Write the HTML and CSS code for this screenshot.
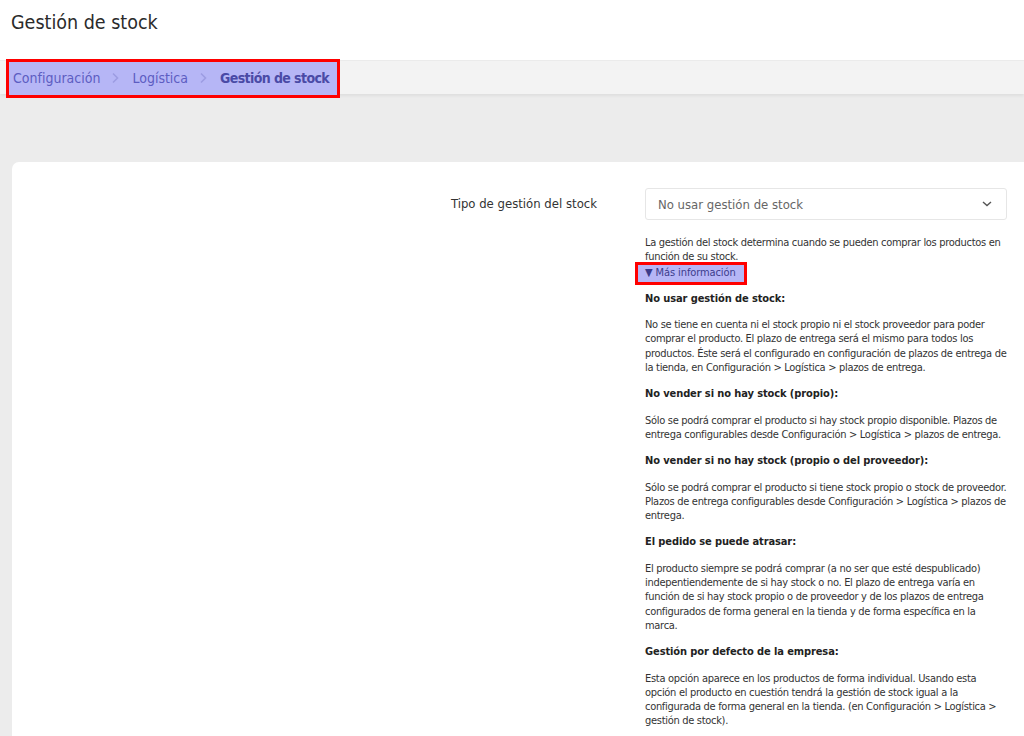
FILE: index.html
```html
<!DOCTYPE html>
<html lang="es">
<head>
    <meta charset="UTF-8">
    <meta name="viewport" content="width=device-width, initial-scale=1.0">
    <title>Gestión de stock</title>
    <link rel="stylesheet" href="styles.css">
</head>
<body>
    <header class="page-header">
        <h1>Gestión de stock</h1>
    </header>

    <div class="breadcrumb-bar">
        <nav class="breadcrumb marked">
            <a href="#">Configuración</a>
            <span class="sep">
                <svg width="8" height="12" viewBox="0 0 8 12"><path d="M2 1.5 L6.5 6 L2 10.5" fill="none" stroke="currentColor" stroke-width="1.6"/></svg>
            </span>
            <a href="#">Logística</a>
            <span class="sep">
                <svg width="8" height="12" viewBox="0 0 8 12"><path d="M2 1.5 L6.5 6 L2 10.5" fill="none" stroke="currentColor" stroke-width="1.6"/></svg>
            </span>
            <span class="current">Gestión de stock</span>
        </nav>
    </div>

    <main class="content">
        <section class="card">
            <div class="form-row">
                <label class="form-label" for="stock-type">Tipo de gestión del stock</label>
                <div class="form-control">
                    <div class="select" id="stock-type">
                        <span>No usar gestión de stock</span>
                        <svg width="10" height="6" viewBox="0 0 10 6"><path d="M1 1 L5 4.5 L9 1" fill="none" stroke="#555" stroke-width="1.4"/></svg>
                    </div>

                    <div class="help">
                        <p class="help-intro">La gestión del stock determina cuando se pueden comprar los productos en función de su stock.</p>
                        <details open>
                            <summary class="marked">&#9660; Más información</summary>

                            <h4>No usar gestión de stock:</h4>
                            <p>No se tiene en cuenta ni el stock propio ni el stock proveedor para poder comprar el producto. El plazo de entrega será el mismo para todos los productos. Éste será el configurado en configuración de plazos de entrega de la tienda, en Configuración &gt; Logística &gt; plazos de entrega.</p>

                            <h4>No vender si no hay stock (propio):</h4>
                            <p>Sólo se podrá comprar el producto si hay stock propio disponible. Plazos de entrega configurables desde Configuración &gt; Logística &gt; plazos de entrega.</p>

                            <h4>No vender si no hay stock (propio o del proveedor):</h4>
                            <p>Sólo se podrá comprar el producto si tiene stock propio o stock de proveedor. Plazos de entrega configurables desde Configuración &gt; Logística &gt; plazos de entrega.</p>

                            <h4>El pedido se puede atrasar:</h4>
                            <p>El producto siempre se podrá comprar (a no ser que esté despublicado) indepentiendemente de si hay stock o no. El plazo de entrega varía en función de si hay stock propio o de proveedor y de los plazos de entrega configurados de forma general en la tienda y de forma específica en la marca.</p>

                            <h4>Gestión por defecto de la empresa:</h4>
                            <p>Esta opción aparece en los productos de forma individual. Usando esta opción el producto en cuestión tendrá la gestión de stock igual a la configurada de forma general en la tienda. (en Configuración &gt; Logística &gt; gestión de stock).</p>
                        </details>
                    </div>
                </div>
            </div>
        </section>
    </main>
</body>
</html>
```

FILE: styles.css
```css
* {
    margin: 0;
    padding: 0;
    box-sizing: border-box;
}

body {
    font-family: 'DejaVu Sans Condensed', 'DejaVu Sans', Verdana, sans-serif;
    background: #ececec;
    color: #333;
    height: 736px;
    overflow: hidden;
}

a {
    text-decoration: none;
}

.page-header {
    background: #fff;
    height: 60px;
    padding: 11px 11px 0;
}

.page-header h1 {
    font-size: 19.5px;
    font-weight: normal;
    color: #2b2b2b;
}

.breadcrumb-bar {
    background: #f3f3f3;
    border-top: 1px solid #ebebeb;
    height: 34px;
    padding-left: 6px;
    box-shadow: 0 2px 3px rgba(0, 0, 0, 0.06);
}

/* highlighted elements */
.marked {
    background: #b6b6f6;
    border: 3px solid #ff0000;
}

.breadcrumb {
    display: inline-flex;
    align-items: center;
    height: 39px;
    margin-top: -2px;
    padding: 0 8px 2px 4px;
    font-size: 14px;
}

.breadcrumb a {
    color: #5d5dc2;
}

.breadcrumb .sep {
    display: flex;
    color: #9d9de2;
    margin: 0 13px 0 11px;
}

.breadcrumb .current {
    color: #4a4aa6;
    font-weight: bold;
    letter-spacing: -0.6px;
}

.content {
    padding: 68px 0 0 12px;
}

.card {
    background: #fff;
    border-radius: 7px 0 0 0;
    height: 600px;
    padding: 26px 17px 0 0;
}

.form-row {
    display: grid;
    grid-template-columns: 1fr 362px;
    column-gap: 48px;
}

.form-label {
    text-align: right;
    font-size: 13px;
    color: #333;
    padding-top: 8px;
}

.select {
    display: flex;
    align-items: center;
    justify-content: space-between;
    height: 32px;
    border: 1px solid #e6e6e6;
    border-radius: 3px;
    padding: 0 14px 0 12px;
    font-size: 13px;
    color: #666;
}

.help {
    font-size: 11px;
    line-height: 14.3px;
    letter-spacing: -0.3px;
    color: #333;
    margin-top: 16px;
}

.help .help-intro {
    margin-bottom: 0;
}

.help summary {
    display: inline-block;
    list-style: none;
    margin: -3px 0 0 -10px;
    padding: 1px 8px 2px 7px;
    color: #3c3c8c;
    font-size: 11px;
    letter-spacing: -0.1px;
    cursor: pointer;
}

.help summary::-webkit-details-marker {
    display: none;
}

.help h4 {
    font-size: 11px;
    font-weight: bold;
    letter-spacing: -0.1px;
    color: #222;
    margin: 7px 0 12px;
}

.help p {
    margin-bottom: 12px;
}
```
